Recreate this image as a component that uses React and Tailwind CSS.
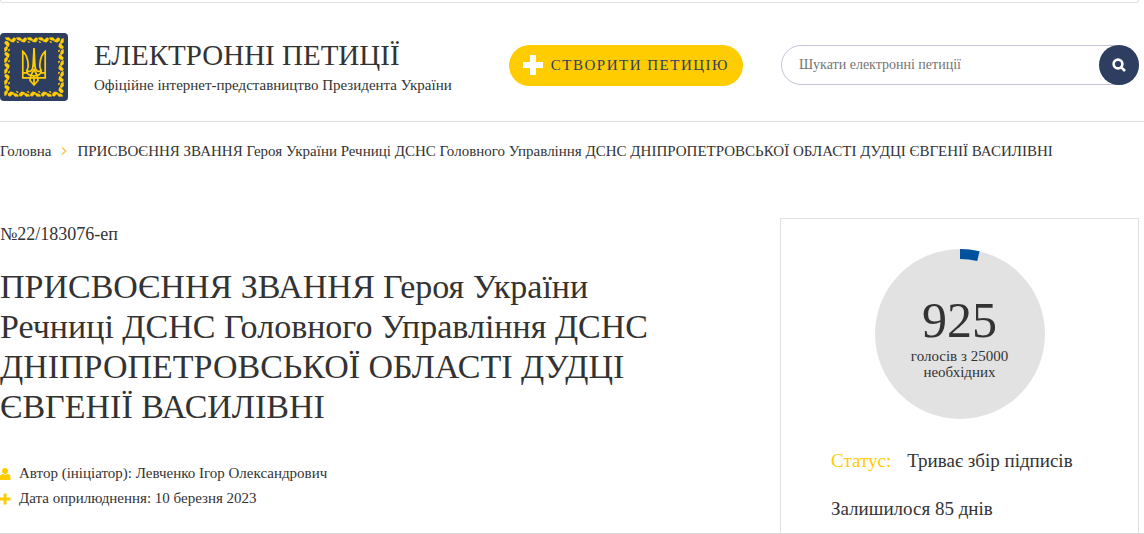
import { useState } from 'react';

const VOTES = 925;
const VOTES_NEEDED = 25000;

const TITLE = 'ПРИСВОЄННЯ ЗВАННЯ Героя України Речниці ДСНС Головного Управління ДСНС ДНІПРОПЕТРОВСЬКОЇ ОБЛАСТІ ДУДЦІ ЄВГЕНІЇ ВАСИЛІВНІ';

const LeafRow = ({ angle }) => (
    <g transform={`rotate(${angle} 34 34)`}>
        {[5, 16, 27, 38, 49].map((x) => (
            <g key={x} transform={`translate(${x} 7)`}>
                <path d="M0 -2.6 L4 -2.8 L6 -0.6 L5.6 1 L3 0.6 L0.8 -0.6 Z" />
                <path d="M5 1.8 L6.4 -0.6 L9 -2.8 L11 -1.6 L10.4 0.8 L8.4 2.6 Z" />
                <path d="M0.4 0.8 L2.4 1.4 L3.4 2.8 L1.2 2.8 Z" />
            </g>
        ))}
    </g>
);

const Logo = () => (
    <svg viewBox="0 0 68 68" className="h-[68px] w-[68px] shrink-0" role="img" aria-label="Герб України">
        <rect width="68" height="68" rx="4" fill="#2d3e60" />
        <g fill="#ffcc00">
            <LeafRow angle={0} />
            <LeafRow angle={90} />
            <LeafRow angle={180} />
            <LeafRow angle={270} />
        </g>
        <g fill="none" stroke="#ffcc00" strokeWidth="1.7">
            <path d="M22.8 18.500 V44.800 H45.200 V18.500 C41.500 21.500 40 26 39.800 32 C39.700 35 40.500 36.500 41.200 37.500 C39.500 39 37 38.800 35.800 36.500 C35 34.500 34.800 32 34.700 28 L34 15 L33.300 28 C33.200 32 33 34.500 32.200 36.500 C31 38.800 28.500 39 26.800 37.500 C27.500 36.500 28.300 35 28.200 32 C28 26 26.500 21.500 22.800 18.500 Z" />
            <path d="M22.8 39.800H28 M45.200 39.800H40" />
            <path d="M26.800 37.500C27 41.500 29 42.500 34 43C39 42.500 41 41.500 41.200 37.500" />
            <path d="M34 36.500C32 40 30 43 30 47.500L34 52L38 47.500C38 43 36 40 34 36.500Z" />
            <path d="M34 16V34 M34 43V52" />
        </g>
    </svg>
);

const VoteChart = ({ votes, needed }) => {
    const r = 80;
    const length = 2 * Math.PI * r;

    return (
        <div className="mx-auto grid w-[170px] place-items-center">
            <svg viewBox="0 0 170 170" className="col-start-1 row-start-1 w-full" aria-hidden="true">
                <circle cx="85" cy="85" r="85" fill="#e2e2e2" />
                <circle
                    cx="85"
                    cy="85"
                    r={r}
                    fill="none"
                    stroke="#00519e"
                    strokeWidth="10"
                    strokeDasharray={`${(length * votes) / needed} ${length}`}
                    transform="rotate(-90 85 85)"
                />
            </svg>
            <div className="col-start-1 row-start-1 w-28 pt-1 text-center text-[#333333]">
                <div className="text-[50px] leading-14">{votes}</div>
                <div className="text-[15px] leading-4">голосів з {needed} необхідних</div>
            </div>
        </div>
    );
};

const Header = () => {
    const [query, setQuery] = useState('');

    return (
        <header className="border-b border-[#e2e2e2]">
            <div className="mr-[5px] h-[3px] rounded-b border border-t-0 border-[#e2e2e2]" />
            <div className="mr-[5px] flex items-center pt-[30px] pb-5">
                <a href="/" className="flex flex-1 items-center gap-[26px]">
                    <Logo />
                    <span className="whitespace-nowrap">
                        <span className="block text-[29px] leading-9">ЕЛЕКТРОННІ ПЕТИЦІЇ</span>
                        <span className="block text-[15px] leading-6">Офіційне інтернет-представництво Президента України</span>
                    </span>
                </a>
                <button type="button" className="mr-[38px] mb-1 flex h-[41px] items-center gap-2 rounded-full bg-[#ffcc00] px-3.5 text-[15px] tracking-widest whitespace-nowrap text-[#2d3e60]">
                    <svg viewBox="0 0 20 20" className="h-5 w-5" fill="#ffffff" aria-hidden="true">
                        <path d="M7 0h6v7h7v6h-7v7H7v-7H0V7h7z" />
                    </svg>
                    СТВОРИТИ ПЕТИЦІЮ
                </button>
                <form className="mb-1 flex h-10 w-[358px] rounded-full border border-[#c8c2d6]" onSubmit={(e) => e.preventDefault()}>
                    <input
                        type="text"
                        aria-label="Шукати електронні петиції"
                        placeholder="Шукати електронні петиції"
                        value={query}
                        onChange={(e) => setQuery(e.target.value)}
                        className="min-w-0 flex-1 bg-transparent px-[17px] text-sm outline-none placeholder:text-[#757575]"
                    />
                    <button type="submit" aria-label="Пошук" className="-m-px flex h-10 w-10 items-center justify-center rounded-full bg-[#2d3e60]">
                        <svg viewBox="0 0 14 14" className="h-3.5 w-3.5" fill="none" stroke="#ffffff" strokeWidth="2.6" aria-hidden="true">
                            <circle cx="6" cy="6" r="4.4" />
                            <path d="M8.600 8.600l4.400 4.400" />
                        </svg>
                    </button>
                </form>
            </div>
        </header>
    );
};

const App = () => (
    <div className="overflow-hidden border-b border-[#dcdcdc] bg-white font-['Georgia','Liberation_Serif',serif] text-[#333333]">
        <Header />

        <nav aria-label="Навігація" className="flex items-center gap-2.5 pt-[17px] text-[15px] leading-6 whitespace-nowrap">
            <a href="/">Головна</a>
            <svg viewBox="0 0 6 8" className="h-2 w-1.5" fill="none" stroke="#fbc04d" strokeWidth="1.3" aria-hidden="true">
                <path d="M1 0.5L4.7 4L1 7.5" />
            </svg>
            <span>{TITLE}</span>
        </nav>

        <main className="mr-[5px] flex items-start gap-24 pt-[55px]">
            <section className="min-w-0 flex-1 pt-1">
                <p className="text-lg leading-6">№22/183076-еп</p>
                <h1 className="mt-[21px] text-[34px] leading-10">{TITLE}</h1>
                <ul className="mt-[34px] text-[15px] leading-[25px]">
                    <li className="flex items-center gap-2">
                        <svg viewBox="0 0 11 12" className="h-3 w-[11px]" fill="#ffcc00" aria-hidden="true">
                            <circle cx="5" cy="3" r="3" />
                            <path d="M0 12V9q0-3 2.5-3Q5 7.5 7.500 6Q10.500 6 10.500 9v3z" />
                        </svg>
                        Автор (ініціатор): Левченко Ігор Олександрович
                    </li>
                    <li className="flex items-center gap-2">
                        <svg viewBox="0 0 11 12" className="h-3 w-[11px]" fill="#ffcc00" aria-hidden="true">
                            <path d="M3.500 0.500h3v4h4v3h-4v4h-3v-4H0v-3h3.500z" />
                        </svg>
                        Дата оприлюднення: 10 березня 2023
                    </li>
                </ul>
            </section>

            <aside className="w-[359px] shrink-0 border border-b-0 border-[#e2e2e2] pt-[30px] pb-[10px]">
                <VoteChart votes={VOTES} needed={VOTES_NEEDED} />
                <div className="mt-7 pl-[50px] text-[19px] leading-7">
                    <p className="flex gap-4">
                        <span className="text-[#ffcc00]">Статус:</span>
                        <span>Триває збір підписів</span>
                    </p>
                    <p className="mt-5">Залишилося 85 днів</p>
                </div>
            </aside>
        </main>
    </div>
);

export default App;
